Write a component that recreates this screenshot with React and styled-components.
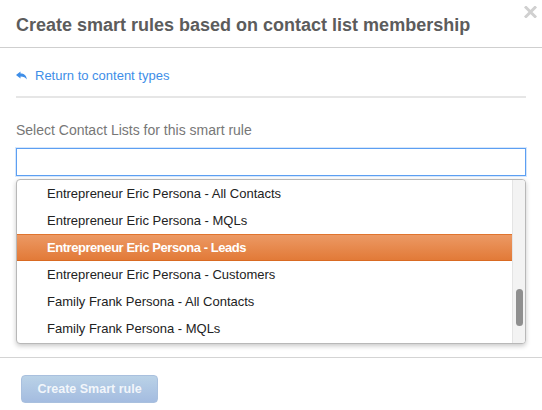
import React from 'react';
import styled, { createGlobalStyle } from 'styled-components';

const Global = createGlobalStyle`
  html, body {
    margin: 0;
    padding: 0;
    background: #fff;
  }
  body {
    font-family: 'Liberation Sans', Arial, sans-serif;
  }
`;

const Modal = styled.div`
  position: relative;
  width: 542px;
  height: 410px;
  background: #fff;
  overflow: hidden;
`;

const Header = styled.header`
  height: 47px;
  border-bottom: 1px solid #cfcfcf;
  padding: 0 16px;
  display: flex;
  align-items: center;
  box-sizing: content-box;
`;

const Title = styled.h1`
  margin: 4px 0 0;
  font-size: 18px;
  font-weight: bold;
  color: #5c5c5c;
`;

const Close = styled.button`
  position: absolute;
  top: 6px;
  right: 5px;
  border: 0;
  background: none;
  padding: 0;
  line-height: 0;
`;

const Body = styled.div`
  padding: 0 16px;
`;

const BackLink = styled.a`
  display: flex;
  align-items: center;
  gap: 8px;
  height: 49px;
  padding-top: 6px;
  box-sizing: border-box;
  border-bottom: 2px solid #e6e6e6;
  font-size: 13px;
  color: #3e8ee8;
  text-decoration: none;
  margin-top: 1px;
`;

const Label = styled.div`
  margin-top: 24px;
  font-size: 14px;
  color: #777;
  line-height: 17px;
`;

const Input = styled.input`
  display: block;
  width: 100%;
  height: 28px;
  margin-top: 9px;
  box-sizing: border-box;
  border: 1px solid #5c9ff2;
  box-shadow: 0 0 0 1px rgba(92, 159, 242, 0.25);
  outline: none;
`;

const Dropdown = styled.div`
  display: flex;
  margin-top: 3px;
  height: 163px;
  border: 1px solid #b8b8b8;
  border-radius: 4px;
  box-shadow: 0 2px 5px rgba(0, 0, 0, 0.22);
  overflow: hidden;
  background: #fff;
`;

const Options = styled.ul`
  flex: 1;
  margin: 0;
  padding: 0;
  list-style: none;
`;

const Option = styled.li`
  height: 27px;
  box-sizing: border-box;
  padding-left: 30px;
  display: flex;
  align-items: center;
  font-size: 13px;
  color: ${p => (p.$active ? '#fff' : '#222')};
  font-weight: ${p => (p.$active ? 'bold' : 'normal')};
  background: ${p => (p.$active ? 'linear-gradient(#ec9964, #e27a38)' : 'transparent')};
  border-top: ${p => (p.$active ? '1px solid #e0742e' : '0')};
  border-bottom: ${p => (p.$active ? '1px solid #d96a22' : '0')};
  letter-spacing: ${p => (p.$active ? '-0.45px' : '0')};
`;

const Track = styled.div`
  width: 12px;
  background: #f3f3f3;
  border-left: 1px solid #e4e4e4;
  display: flex;
  flex-direction: column;
  align-items: center;
  padding-top: 109px;
`;

const Thumb = styled.div`
  width: 7px;
  height: 37px;
  border-radius: 4px;
  background: #8f8f8f;
`;

const Footer = styled.footer`
  margin-top: 13px;
  border-top: 1px solid #d4d4d4;
  padding: 17px 21px;
`;

const Button = styled.button`
  width: 137px;
  height: 28px;
  border: 1px solid #a9c0de;
  border-radius: 4px;
  background: linear-gradient(#bad2e7, #a4bce0);
  color: rgba(255, 255, 255, 0.85);
  font-family: 'Liberation Sans', Arial, sans-serif;
  font-size: 12.5px;
  font-weight: bold;
`;

const ReplyIcon = () => (
  <svg width="11" height="9" viewBox="0 0 11 9">
    <path d="M0 4 L4.5 0.5 L4.5 2.6 C8 2.6 10.5 4.5 10.8 8.5 C9.6 6.3 7.6 5.4 4.5 5.4 L4.5 7.5 Z" fill="#3e8ee8" />
  </svg>
);

const CloseIcon = () => (
  <svg width="13" height="12" viewBox="0 0 13 12">
    <path d="M2 1.5 L11 10.5 M11 1.5 L2 10.5" stroke="#d0d0d0" strokeWidth="3" strokeLinecap="square" />
  </svg>
);

const lists = [
  'Entrepreneur Eric Persona - All Contacts',
  'Entrepreneur Eric Persona - MQLs',
  'Entrepreneur Eric Persona - Leads',
  'Entrepreneur Eric Persona - Customers',
  'Family Frank Persona - All Contacts',
  'Family Frank Persona - MQLs',
];

export default function App() {
  return (
    <Modal>
      <Global />
      <Header>
        <Title>Create smart rules based on contact list membership</Title>
      </Header>
      <Close aria-label="Close">
        <CloseIcon />
      </Close>
      <Body>
        <BackLink href="#">
          <ReplyIcon />
          Return to content types
        </BackLink>
        <Label>Select Contact Lists for this smart rule</Label>
        <Input type="text" />
        <Dropdown>
          <Options>
            {lists.map((name, i) => (
              <Option key={name} $active={i === 2}>{name}</Option>
            ))}
          </Options>
          <Track>
            <Thumb />
          </Track>
        </Dropdown>
      </Body>
      <Footer>
        <Button disabled>Create Smart rule</Button>
      </Footer>
    </Modal>
  );
}
